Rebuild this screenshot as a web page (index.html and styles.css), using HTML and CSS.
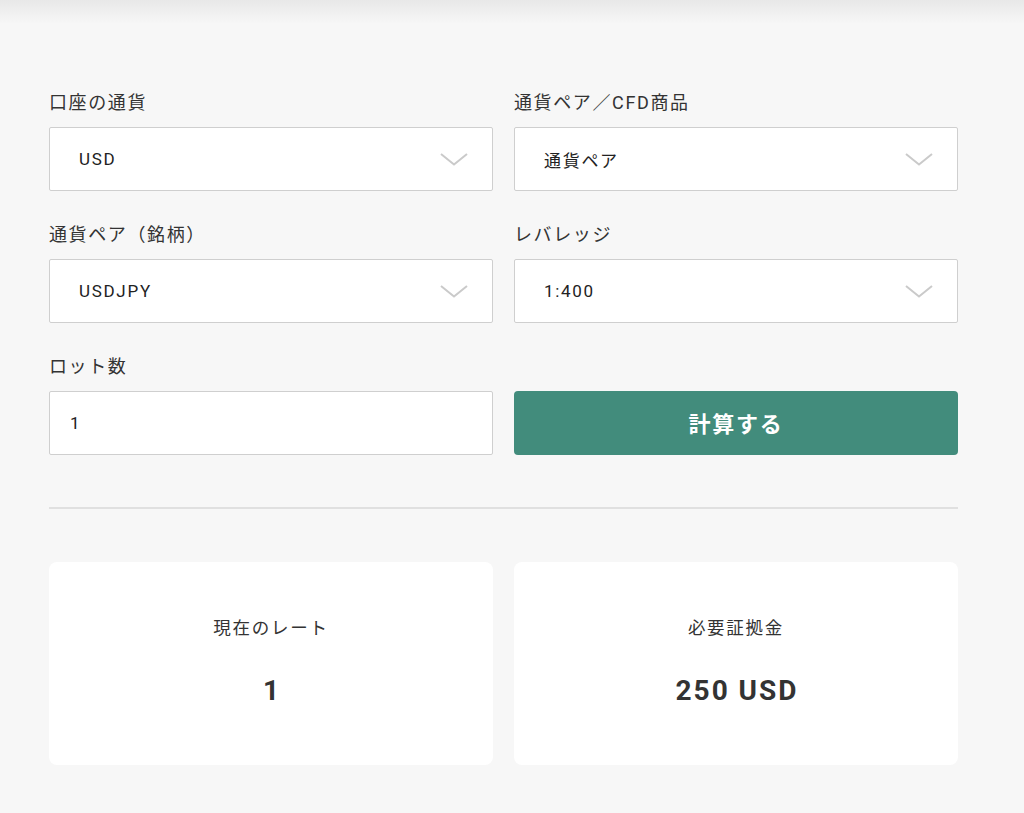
FILE: index.html
```html
<!DOCTYPE html>
<html lang="ja">
<head>
<meta charset="utf-8">
<title>証拠金計算</title>
<link rel="stylesheet" href="styles.css">
</head>
<body>
<div class="topshade"></div>
<main class="calc">
  <div class="form">
    <div class="field">
      <label class="label">口座の通貨</label>
      <div class="select"><span>USD</span><svg class="chev" viewBox="0 0 28 13"><path d="M1 1 L14 11.5 L27 1" /></svg></div>
    </div>
    <div class="field">
      <label class="label">通貨ペア／CFD商品</label>
      <div class="select"><span>通貨ペア</span><svg class="chev" viewBox="0 0 28 13"><path d="M1 1 L14 11.5 L27 1" /></svg></div>
    </div>
    <div class="field">
      <label class="label">通貨ペア（銘柄）</label>
      <div class="select"><span>USDJPY</span><svg class="chev" viewBox="0 0 28 13"><path d="M1 1 L14 11.5 L27 1" /></svg></div>
    </div>
    <div class="field">
      <label class="label">レバレッジ</label>
      <div class="select"><span>1:400</span><svg class="chev" viewBox="0 0 28 13"><path d="M1 1 L14 11.5 L27 1" /></svg></div>
    </div>
    <div class="field">
      <label class="label">ロット数</label>
      <div class="input">1</div>
    </div>
    <div class="field field-end">
      <button class="btn">計算する</button>
    </div>
  </div>
  <hr class="divider">
  <div class="results">
    <div class="card">
      <div class="card-label">現在のレート</div>
      <div class="card-value">1</div>
    </div>
    <div class="card">
      <div class="card-label">必要証拠金</div>
      <div class="card-value">250 USD</div>
    </div>
  </div>
</main>
</body>
</html>
```

FILE: styles.css
```css
* { box-sizing: border-box; }
html, body { margin: 0; padding: 0; }
body {
  background: #f7f7f7;
  font-family: Roboto, "Noto Sans CJK JP", sans-serif;
  color: #333;
  height: 813px;
  overflow: hidden;
}
.topshade {
  height: 24px;
  background: linear-gradient(#e8e8e8, #f7f7f7);
  margin-bottom: -24px;
}
.calc {
  width: 909px;
  margin-left: 49px;
  padding-top: 92px;
}
.form {
  display: grid;
  grid-template-columns: 444px 444px;
  column-gap: 21px;
  row-gap: 33px;
}
.field {
  display: flex;
  flex-direction: column;
  gap: 13px;
}
.field-end { justify-content: flex-end; }
.label {
  font-size: 18px;
  line-height: 22px;
  letter-spacing: 0.09em;
  color: #333;
}
.select, .input {
  height: 64px;
  background: #fff;
  border: 1px solid #cfcfcf;
  border-radius: 2px;
  display: flex;
  align-items: center;
  font-size: 17px;
  letter-spacing: 0.1em;
  color: #222;
}
.select {
  padding: 0 24px 0 29px;
  justify-content: space-between;
}
.input { padding-left: 20px; }
.chev {
  width: 28px;
  height: 13px;
  fill: none;
  stroke: #cacaca;
  stroke-width: 2;
}
.btn {
  height: 64px;
  width: 100%;
  border: none;
  border-radius: 4px;
  background: #428c7c;
  color: #fff;
  font-family: Roboto, "Noto Sans CJK JP", sans-serif;
  font-size: 22px;
  font-weight: 700;
  letter-spacing: 0.08em;
  padding: 0 0 3px;
}
.divider {
  margin: 52px 0 0;
  border: none;
  border-top: 2px solid #e0e0e0;
  height: 0;
}
.results {
  margin-top: 53px;
  display: grid;
  grid-template-columns: 444px 444px;
  column-gap: 21px;
}
.card {
  background: #fff;
  border-radius: 8px;
  height: 203px;
  padding-top: 54px;
  text-align: center;
}
.card-label {
  font-size: 17.5px;
  line-height: 24px;
  letter-spacing: 0.1em;
}
.card-value {
  margin-top: 33px;
  font-size: 28px;
  line-height: 36px;
  font-weight: 700;
  letter-spacing: 0.07em;
  padding-left: 0.07em;
  color: #333;
}
```
